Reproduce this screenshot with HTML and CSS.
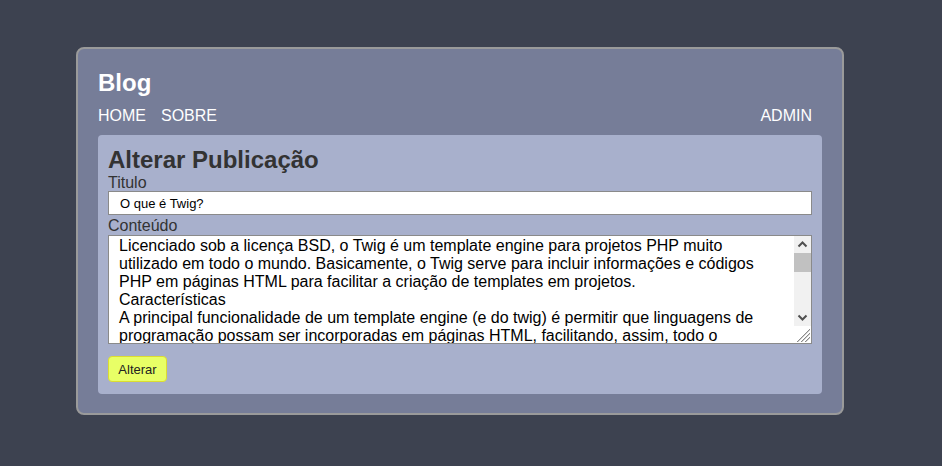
FILE: index.html
```html
<!DOCTYPE html>
<html lang="pt-BR">
<head>
<meta charset="utf-8">
<title>Blog</title>
<link rel="stylesheet" href="styles.css">
</head>
<body>
<div class="card">
  <h1 class="brand">Blog</h1>
  <nav class="nav">
    <a class="nav-link" href="#">HOME</a>
    <a class="nav-link" href="#">SOBRE</a>
    <a class="nav-link nav-right" href="#">ADMIN</a>
  </nav>
  <main class="panel">
    <h2 class="panel-title">Alterar Publicação</h2>
    <form class="form">
      <label class="label" for="titulo">Titulo</label>
      <input class="input" id="titulo" type="text" value="O que é Twig?">
      <label class="label" for="conteudo">Conteúdo</label>
      <div class="textarea-box">
        <textarea class="textarea" id="conteudo">Licenciado sob a licença BSD, o Twig é um template engine para projetos PHP muito utilizado em todo o mundo. Basicamente, o Twig serve para incluir informações e códigos PHP em páginas HTML para facilitar a criação de templates em projetos.
Características
A principal funcionalidade de um template engine (e do twig) é permitir que linguagens de programação possam ser incorporadas em páginas HTML, facilitando, assim, todo o processo de desenvolvimento de um site ou sistema. Além disso, o Twig é rápido, seguro e flexível, oferecendo herança de templates, blocos, filtros e funções que tornam a criação de páginas muito mais simples.
Sintaxe
A sintaxe do Twig é simples e concisa. Para exibir uma variável, basta utilizar chaves duplas, e para executar comandos, como laços de repetição e estruturas condicionais, utiliza-se chaves com o sinal de porcentagem.
Instalação
O Twig pode ser instalado facilmente por meio do Composer, o gerenciador de dependências do PHP, bastando executar um único comando no terminal do projeto.</textarea>
        <div class="scrollbar" aria-hidden="true">
          <div class="sb-btn">
            <svg width="17" height="17" viewBox="0 0 17 17"><path d="M4.5 10.5 L8.5 6.5 L12.5 10.5" fill="none" stroke="#505050" stroke-width="2"/></svg>
          </div>
          <div class="sb-track"><div class="sb-thumb"></div></div>
          <div class="sb-btn">
            <svg width="17" height="17" viewBox="0 0 17 17"><path d="M4.5 6.5 L8.5 10.5 L12.5 6.5" fill="none" stroke="#505050" stroke-width="2"/></svg>
          </div>
          <div class="sb-corner">
            <svg width="17" height="17" viewBox="0 0 17 17">
              <path d="M3 16 L16 3" stroke="#8a8a8a" stroke-width="1"/>
              <path d="M7 16 L16 7" stroke="#8a8a8a" stroke-width="1"/>
              <path d="M11 16 L16 11" stroke="#8a8a8a" stroke-width="1"/>
              <path d="M4 16 L16 4" stroke="#d0d0d0" stroke-width="1"/>
              <path d="M8 16 L16 8" stroke="#d0d0d0" stroke-width="1"/>
              <path d="M12 16 L16 12" stroke="#d0d0d0" stroke-width="1"/>
            </svg>
          </div>
        </div>
      </div>
      <div class="actions">
        <button class="button" type="button">Alterar</button>
      </div>
    </form>
  </main>
</div>
</body>
</html>
```
FILE: styles.css
```css
html, body {
  margin: 0;
  padding: 0;
}
body {
  background: #3d4250;
  font-family: "Liberation Sans", Arial, sans-serif;
  padding: 47px 0 0 76px;
  min-height: 466px;
  box-sizing: border-box;
}
.card {
  width: 768px;
  box-sizing: border-box;
  background: #767d98;
  border: 2px solid #9a9a9a;
  border-radius: 8px;
  padding: 20px 20px 19px 20px;
}
.brand {
  margin: 0;
  font-size: 24px;
  line-height: 28px;
  font-weight: bold;
  color: #ffffff;
}
.nav {
  display: flex;
  margin-top: 10px;
  height: 18px;
}
.nav-link {
  color: #ffffff;
  text-decoration: none;
  font-size: 16px;
  line-height: 18px;
  margin-right: 15px;
}
.nav-right {
  margin-left: auto;
  margin-right: 10px;
}
.panel {
  margin-top: 10px;
  background: #a8b0cc;
  border-radius: 4px;
  padding: 11px 10px 12px 10px;
}
.panel-title {
  margin: 0;
  font-size: 24px;
  line-height: 28px;
  font-weight: bold;
  color: #333333;
}
.form {
  display: flex;
  flex-direction: column;
}
.label {
  font-size: 16px;
  line-height: 17px;
  color: #333333;
}
.input {
  height: 24px;
  box-sizing: border-box;
  margin: 0 0 2px 0;
  border: 1px solid #8a8a8a;
  background: #ffffff;
  font-family: "Liberation Sans", Arial, sans-serif;
  font-size: 13px;
  padding: 0 11px;
  color: #000;
}
.textarea-box {
  display: flex;
  height: 109px;
  box-sizing: border-box;
  margin-top: 1px;
  border: 1px solid #8a8a8a;
  background: #ffffff;
}
.textarea {
  flex: 1;
  min-width: 0;
  height: 107px;
  box-sizing: border-box;
  margin: 0;
  border: 0;
  outline: none;
  background: #ffffff;
  font-family: "Liberation Sans", Arial, sans-serif;
  font-size: 16px;
  line-height: 18px;
  padding: 1px 10px 0 10px;
  color: #000;
  resize: none;
  overflow: hidden;
}
.scrollbar {
  width: 17px;
  display: flex;
  flex-direction: column;
  background: #f1f1f1;
}
.sb-btn {
  height: 17px;
  display: flex;
}
.sb-track {
  flex: 1;
  display: flex;
  flex-direction: column;
}
.sb-thumb {
  height: 19px;
  background: #c1c1c1;
}
.sb-corner {
  height: 17px;
  background: #ffffff;
  display: flex;
}
.actions {
  margin-top: 12px;
  display: flex;
}
.button {
  height: 26px;
  width: 59px;
  box-sizing: border-box;
  background: #e8ff66;
  border: 1px solid #dcdc30;
  border-radius: 4px;
  font-family: "Liberation Sans", Arial, sans-serif;
  font-size: 13px;
  color: #222;
  padding: 0;
}
```
